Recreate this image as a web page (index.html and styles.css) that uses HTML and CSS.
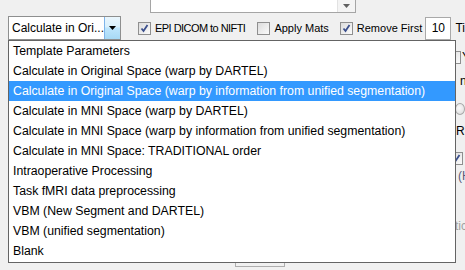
FILE: index.html
```html
<!DOCTYPE html>
<html>
<head>
<meta charset="utf-8">
<link rel="stylesheet" href="styles.css">
</head>
<body>
<div class="topbar">
  <div class="prevcombo"><div class="prevbtn"><svg width="7" height="4" viewBox="0 0 7 4"><path d="M0 0h7L3.5 4z" fill="#606060"/></svg></div></div>
</div>
<div class="toolbar">
  <div class="combo">
    <span class="combo-text">Calculate in Ori...</span>
    <span class="combo-btn"><svg width="7" height="4" viewBox="0 0 7 4"><path d="M0 0h7L3.5 4z" fill="#000"/></svg></span>
  </div>
  <span class="cb cb-epi checked"><svg width="11" height="11" viewBox="0 0 11 11"><path d="M2.5 5.5L4.5 8L8.5 2" fill="none" stroke="#3b4f8c" stroke-width="1.8"/></svg></span>
  <span class="lbl lbl-epi">EPI DICOM to NIFTI</span>
  <span class="cb cb-apply"></span>
  <span class="lbl">Apply Mats</span>
  <span class="cb cb-remove checked"><svg width="11" height="11" viewBox="0 0 11 11"><path d="M2.5 5.5L4.5 8L8.5 2" fill="none" stroke="#3b4f8c" stroke-width="1.8"/></svg></span>
  <span class="lbl">Remove First</span>
  <span class="field">10</span>
  <span class="lbl lbl-ti">Ti</span>
</div>
<div class="under">
  <div class="side">
    <div class="srow s1"><span class="cb"></span><span class="sl">Y</span></div>
    <div class="srow s2">n</div>
    <div class="srow s3"><span class="radio"></span></div>
    <div class="srow s4">Right</div>
    <div class="srow s5"><span class="cb checked"><svg width="11" height="11" viewBox="0 0 11 11"><path d="M2.5 5.5L4.5 8L8.5 2" fill="none" stroke="#3b4f8c" stroke-width="1.8"/></svg></span></div>
    <div class="srow s6">(H</div>
    <div class="srow s7">tic</div>
  </div>
  <div class="btmbox"></div>
</div>
<div class="popup">
  <div class="item">Template Parameters</div>
  <div class="item">Calculate in Original Space (warp by DARTEL)</div>
  <div class="item sel">Calculate in Original Space (warp by information from unified segmentation)</div>
  <div class="item">Calculate in MNI Space (warp by DARTEL)</div>
  <div class="item">Calculate in MNI Space (warp by information from unified segmentation)</div>
  <div class="item">Calculate in MNI Space: TRADITIONAL order</div>
  <div class="item">Intraoperative Processing</div>
  <div class="item">Task fMRI data preprocessing</div>
  <div class="item">VBM (New Segment and DARTEL)</div>
  <div class="item">VBM (unified segmentation)</div>
  <div class="item">Blank</div>
</div>
</body>
</html>
```
FILE: styles.css
```css
html, body {
  margin: 0;
  padding: 0;
  background: #f0f0f0;
  font-family: "Liberation Sans", Arial, sans-serif;
  color: #000;
  overflow: hidden;
  width: 465px;
  height: 270px;
}
body { position: relative; }

.topbar { height: 13px; }
.prevcombo {
  margin-left: 150px;
  width: 206px;
  height: 13px;
  box-sizing: border-box;
  background: #fff;
  border: 1px solid #a5a5a5;
  border-top: none;
  display: flex;
  justify-content: flex-end;
}
.prevbtn {
  width: 17px;
  height: 12px;
  background: #f4f4f4;
  border-left: 1px solid #e2e2e2;
  display: flex;
  align-items: center;
  justify-content: center;
}

.toolbar {
  display: flex;
  align-items: center;
  height: 26px;
  margin-top: 2px;
  font-size: 11px;
}
.combo {
  margin-left: 8px;
  width: 118px;
  height: 24px;
  box-sizing: border-box;
  border: 1px solid #8e8f8f;
  background: #fff;
  display: flex;
  align-items: stretch;
}
.combo-text {
  flex: 1;
  font-size: 12px;
  line-height: 22px;
  padding-left: 3px;
  white-space: nowrap;
  overflow: hidden;
}
.combo-btn {
  width: 15px;
  background: linear-gradient(#eaf6fd 0%, #d9f0fc 45%, #bee6fd 50%, #a7d9f5 100%);
  border-left: 1px solid #7eb4ea;
  display: flex;
  align-items: center;
  justify-content: center;
}

.cb {
  width: 13px;
  height: 13px;
  box-sizing: border-box;
  border: 1px solid #8f8f8f;
  background: linear-gradient(135deg, #dcdcdc, #fbfbfb);
  display: inline-flex;
  align-items: center;
  justify-content: center;
  flex: none;
}
.cb svg { display: block; }
.cb-epi { margin-left: 17px; }
.cb-apply { margin-left: 12px; }
.cb-remove { margin-left: 11px; }
.lbl { margin-left: 4px; white-space: nowrap; }
.lbl-epi { letter-spacing: -0.55px; }
.field {
  margin-left: 3px;
  width: 30px;
  height: 23px;
  box-sizing: border-box;
  border: 1px solid #a9a9a9;
  background: #fff;
  font-size: 12px;
  line-height: 21px;
  text-align: center;
}
.lbl-ti { margin-left: 4px; font-size: 12px; }

.under { position: relative; }
.side {
  margin-left: 448px;
  display: flex;
  flex-direction: column;
  font-size: 12px;
  white-space: nowrap;
}
.srow { display: flex; align-items: center; height: 14px; }
.s1 { margin-top: 9px; }
.s1 .sl { margin-left: 1px; color: #000; }
.s2 { margin-top: 10px; padding-left: 12px; }
.s3 { margin-top: 14px; padding-left: 7px; }
.radio {
  width: 12px;
  height: 12px;
  border-radius: 50%;
  border: 1px solid #a8a8a8;
  background: radial-gradient(circle at 40% 40%, #fafafa, #dadada);
  box-sizing: border-box;
}
.s4 { margin-top: 8px; padding-left: 8px; }
.s5 { margin-top: 13px; padding-left: 2px; }
.s6 { margin-top: 4px; padding-left: 10px; color: #5a5a7a; }
.s7 { margin-top: 36px; padding-left: 7px; color: #a0a0a0; }

.btmbox {
  position: absolute;
  left: 235px;
  top: 205px;
  width: 50px;
  height: 21px;
  box-sizing: border-box;
  border: 1px solid #adadad;
  background: #f0f0f0;
}

.popup {
  position: absolute;
  left: 8px;
  top: 40px;
  width: 448px;
  height: 223px;
  box-sizing: border-box;
  border: 1px solid #646464;
  background: #fff;
  font-size: 12.3px;
}
.item {
  height: 20px;
  line-height: 20px;
  padding-left: 4px;
  white-space: nowrap;
}
.item.sel {
  background: #3399ff;
  color: #fff;
}
```
